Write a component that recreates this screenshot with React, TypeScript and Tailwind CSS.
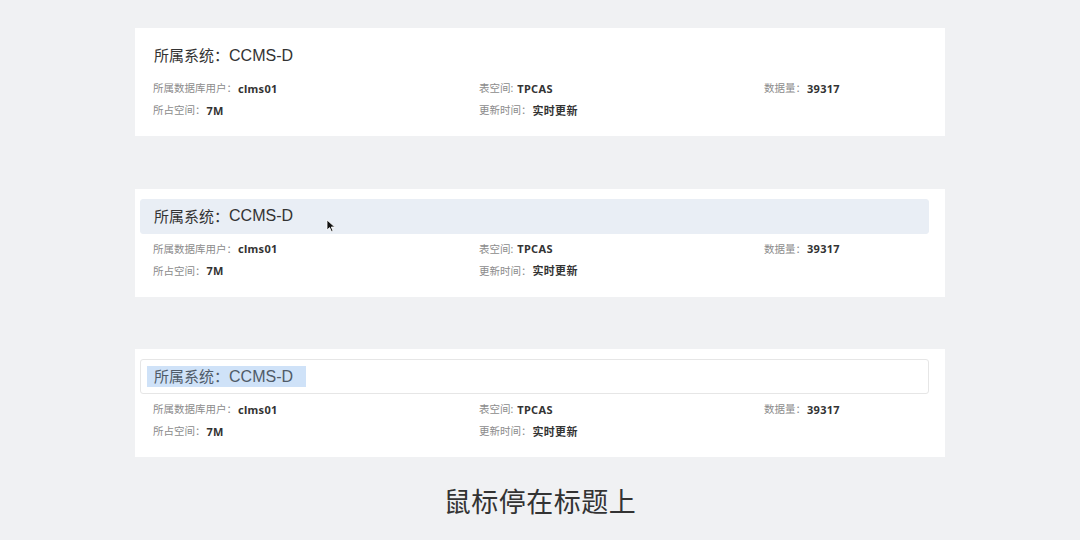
import React from 'react';

type Variant = 'normal' | 'hover' | 'selected';

const FONT = { fontFamily: '"Noto Sans", "Noto Sans CJK SC", sans-serif' };
const TITLE_LATIN = { fontFamily: '"Liberation Sans", "Noto Sans CJK SC", sans-serif' };

const Field = ({ label, value, gap = 'ml-[1px]' }: { label: string; value: string; gap?: string }) => (
  <div className="flex items-center h-[22px] text-[10.5px] whitespace-nowrap">
    <span className="text-[#8c8c8c]">{label}</span>
    <span className={`${gap} text-[11px] font-bold text-[#333] tracking-[0.3px]`}>{value}</span>
  </div>
);

const Cursor = () => (
  <svg className="absolute left-[185px] top-[19px]" width="10" height="14" viewBox="0 0 10 14">
    <path d="M1 1 L1 11 L3.6 8.6 L5.4 12.6 L7 11.9 L5.3 8 L8.8 8 Z" fill="#111" stroke="#fff" strokeWidth="0.8" />
  </svg>
);

const Card = ({ variant }: { variant: Variant }) => {
  const barClass =
    variant === 'hover'
      ? 'bg-[#e9eef5] border border-[#e9eef5]'
      : variant === 'selected'
        ? 'bg-white border border-[#e6e6e6]'
        : 'border border-transparent';

  return (
    <div className="w-[810px] h-[108px] bg-white pt-[10px]">
      <div className={`relative ml-[5px] mr-[16px] h-[35px] rounded-[3px] flex items-center pl-[6px] ${barClass}`}>
        <span
          className={`pl-[7px] pr-[13px] h-[21px] flex items-center ${
            variant === 'selected' ? 'bg-[#cfe2f8] text-[#505b68]' : 'text-[#333]'
          }`}
        >
          <span className="text-[15px]">所属系统：</span>
          <span className="text-[16px]" style={TITLE_LATIN}>CCMS-D</span>
        </span>
        {variant === 'hover' && <Cursor />}
      </div>
      <div className="mt-[5px] pl-[18px] grid grid-cols-[326px_285px_1fr]">
        <Field label="所属数据库用户：" value="clms01" />
        <Field label="表空间:" value="TPCAS" gap="ml-[4px]" />
        <Field label="数据量：" value="39317" />
        <Field label="所占空间：" value="7M" />
        <Field label="更新时间：" value="实时更新" />
      </div>
    </div>
  );
};

export default function App() {
  return (
    <div className="w-[1080px] h-[540px] bg-[#f0f1f3] flex flex-col items-center pt-[28px]" style={FONT}>
      <div className="flex flex-col gap-[52.5px]">
        <Card variant="normal" />
        <Card variant="hover" />
        <Card variant="selected" />
      </div>
      <div className="mt-[27px] text-[27px] leading-[36px] text-[#333] tracking-[0.5px]">鼠标停在标题上</div>
    </div>
  );
}
